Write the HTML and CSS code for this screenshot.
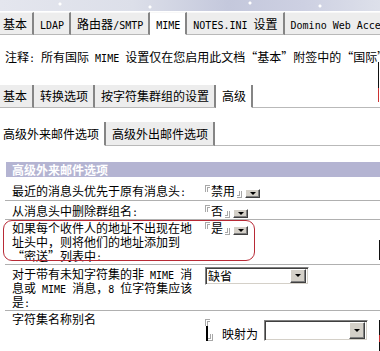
FILE: index.html
```html
<!DOCTYPE html>
<html lang="zh-CN">
<head>
<meta charset="utf-8">
<link rel="stylesheet" href="styles.css">
</head>
<body>
<div class="banner"></div>
<div class="tabs t1">
  <div class="tab first">基本</div>
  <div class="tab"><span class="lat">LDAP</span></div>
  <div class="tab">路由器<span class="lat">/SMTP</span></div>
  <div class="tab sel"><span class="lat">MIME</span></div>
  <div class="tab"><span class="lat">NOTES.INI </span>设置</div>
  <div class="tab"><span class="lat">Domino Web Access</span></div>
</div>
<div class="note">注释<span class="lat">: </span>所有国际<span class="lat"> MIME </span>设置仅在您启用此文档<span class="ql">“</span>基本<span class="qr">”</span>附签中的<span class="ql">“</span>国际<span class="qr">”</span>设置后才有效。</div>
<div class="tabs t2">
  <div class="tab first">基本</div>
  <div class="tab">转换选项</div>
  <div class="tab">按字符集群组的设置</div>
  <div class="tab sel">高级</div>
  <div class="fill"></div>
</div>
<div class="tabs t3">
  <div class="tab first sel">高级外来邮件选项</div>
  <div class="tab">高级外出邮件选项</div>
  <div class="fill"></div>
</div>
<div class="section">高级外来邮件选项</div>
<div class="row r1">
  <div class="label">最近的消息头优先于原有消息头<span class="lat">:</span></div>
  <div class="value"><span class="fo"></span><span class="fv">禁用</span><span class="fc"></span><span class="mini"></span></div>
</div>
<div class="row r2">
  <div class="label">从消息头中删除群组名<span class="lat">:</span></div>
  <div class="value"><span class="fo"></span><span class="fv">否</span><span class="fc"></span><span class="mini"></span></div>
</div>
<div class="row r3">
  <div class="label">如果每个收件人的地址不出现在地<br>址头中，则将他们的地址添加到<br><span class="ql">“</span>密送<span class="qr">”</span>列表中<span class="lat">:</span></div>
  <div class="value"><span class="fo"></span><span class="fv">是</span><span class="fc"></span><span class="mini"></span></div>
  <div class="mark"></div>
</div>
<div class="row r4">
  <div class="label">对于带有未知字符集的非<span class="lat"> MIME </span>消<br>息或<span class="lat"> MIME </span>消息，<span class="lat">8 </span>位字符集应该<br>是<span class="lat">:</span></div>
  <div class="value"><div class="select s1"><span class="stext">缺省</span><span class="sbtn"></span></div></div>
</div>
<div class="row r5">
  <div class="label">字符集名称别名</div>
  <div class="value v5">
    <div class="empty"><span class="fo"></span><span class="cl"><span class="cursor"></span><span class="fc"></span></span></div>
    <span class="maps">映射为</span>
    <div class="select s2"><span class="stext"></span><span class="sbtn"></span></div>
  </div>
</div>
<div class="edge e1"></div>
<div class="edge e2"></div>
<div class="edge e3"></div>
</body>
</html>
```
FILE: styles.css
```css
* { box-sizing: border-box; }
html, body { margin: 0; padding: 0; }
body {
  width: 380px;
  height: 351px;
  overflow: hidden;
  position: relative;
  background: #fff;
  color: #000;
  font-family: "Noto Sans CJK SC", "DejaVu Sans", sans-serif;
  font-size: 12px;
  line-height: 14px;
}
.lat { font-family: "DejaVu Sans Mono", "Liberation Mono", monospace; font-size: 10px; line-height: 10px; white-space: pre; }
.ql, .qr { display: inline-block; width: 12px; }
.ql { text-align: right; }
.qr { text-align: left; }

.banner {
  height: 11px;
  background:
    radial-gradient(circle at 60px 4px, #ffffff 0 1px, transparent 2px),
    radial-gradient(circle at 150px 7px, #ffffff 0 1px, transparent 2px),
    radial-gradient(circle at 250px 3px, #ffffff 0 1px, transparent 2px),
    radial-gradient(circle at 320px 6px, #ffffff 0 1px, transparent 2px),
    linear-gradient(90deg, #e4e6ee 0%, #dcdfe9 35%, #c4c8dc 60%, #cdd0e2 80%, #dde0ea 100%);
}

.tabs { display: flex; white-space: nowrap; overflow: hidden; height: 23px; }
.tab {
  flex-shrink: 0;
  height: 23px;
  line-height: 22px;
  padding: 0 5px 0 6px;
  background: #ededed;
  border-right: 2px solid #858585;
  border-bottom: 1px solid #b9b9b9;
}
.tab.first { padding-left: 3px; }
.tab.sel { background: #fff; border-bottom-color: #fff; }
.fill { flex: 1; border-bottom: 1px solid #b9b9b9; }
.t1 { margin-top: 1px; }
.t1 .tab { border-top: 1px solid #f8f8f8; }
.note { margin: 15px 0 21px 5px; height: 14px; white-space: nowrap; overflow: hidden; line-height: 14px; }
.t3 { margin-top: 14px; height: 24px; }
.t3 .tab { height: 24px; line-height: 23px; }

.section {
  margin: 16px 0 0 6px;
  height: 15px;
  line-height: 15px;
  background: #b4b4d2;
  color: #fff;
  font-weight: bold;
  padding-left: 6px;
}

.row {
  display: grid;
  grid-template-columns: 200px 1fr;
  margin-left: 5px;
  border-bottom: 1px solid #b0b0b0;
  position: relative;
}
.label { padding-left: 7px; white-space: nowrap; }
.value { display: flex; align-items: stretch; height: 14px; }
.r1 { padding: 7px 0 2px; height: 24px; }
.r2 { padding: 3px 0 1px; height: 19px; }
.r3 { padding: 1px 0 1px; height: 45px; }
.r4 { padding: 2px 0 4px; line-height: 13px; height: 46px; }
.r5 { padding: 1px 0 0; border-bottom: none; height: 40px; }

.fo {
  align-self: flex-start;
  margin-top: 1px;
  width: 5px;
  height: 7px;
  border-top: 3px double #a8a8a8;
  border-left: 3px double #a8a8a8;
}
.fc {
  align-self: flex-end;
  width: 5px;
  height: 7px;
  margin-left: 2px;
  border-bottom: 3px double #a8a8a8;
  border-right: 3px double #a8a8a8;
}
.fv { margin-left: 1px; }
.mini {
  align-self: flex-end;
  position: relative;
  width: 15px;
  height: 9px;
  margin-left: 3px;
  background: #d4d0c8;
  border-top: 1px solid #fff;
  border-left: 1px solid #fff;
  border-right: 1px solid #404040;
  border-bottom: 1px solid #404040;
  box-shadow: inset -1px -1px 0 #808080;
}
.mini::after, .sbtn::after {
  content: "";
  position: absolute;
  left: 50%;
  top: 50%;
  margin: -2px 0 0 -3px;
  border-left: 3px solid transparent;
  border-right: 3px solid transparent;
  border-top: 3px solid #000;
}
.mark {
  position: absolute;
  left: -2px;
  top: 0;
  width: 252px;
  height: 41px;
  border: 1px solid #b82a36;
  border-radius: 9px;
}

.select {
  position: relative;
  display: flex;
  align-items: center;
  background: #fff;
  border-top: 1px solid #808080;
  border-left: 1px solid #808080;
  border-right: 1px solid #fff;
  border-bottom: 1px solid #fff;
  box-shadow: inset 1px 1px 0 #404040, inset -1px -1px 0 #d4d0c8;
}
.s1 { width: 104px; height: 18px; }
.r4 .value { height: auto; align-items: flex-start; }
.stext { flex: 1; padding-left: 2px; line-height: 14px; }
.sbtn {
  position: relative;
  width: 16px;
  height: 14px;
  margin-right: 2px;
  background: #d4d0c8;
  border-top: 1px solid #fff;
  border-left: 1px solid #fff;
  border-right: 1px solid #404040;
  border-bottom: 1px solid #404040;
  box-shadow: inset -1px -1px 0 #808080;
}
.s2 { width: 104px; height: 21px; margin-left: 6px; }
.s2 .sbtn { height: 17px; }

.v5 { height: 22px; margin-top: 7px; align-items: flex-end; }
.empty { display: flex; flex-direction: column; justify-content: space-between; height: 22px; width: 12px; }
.empty .fo { margin-top: 0; }
.cl { display: flex; align-items: flex-end; }
.cursor { width: 2px; height: 15px; background: #000; margin-left: 1px; }
.cl .fc { margin-left: 0; height: 7px; }
.maps { margin-left: 5px; line-height: 14px; }

.edge { position: absolute; width: 1px; background: #111; right: 1px; }
.e1 { top: 62px; height: 40px; background: linear-gradient(#111 0 65%, #c33 65%); }
.e2 { top: 240px; height: 20px; right: 0; }
.e3 { top: 320px; height: 31px; right: 0; background: linear-gradient(#111 0 50%, #c33 50% 70%, #111 70%); }
```
